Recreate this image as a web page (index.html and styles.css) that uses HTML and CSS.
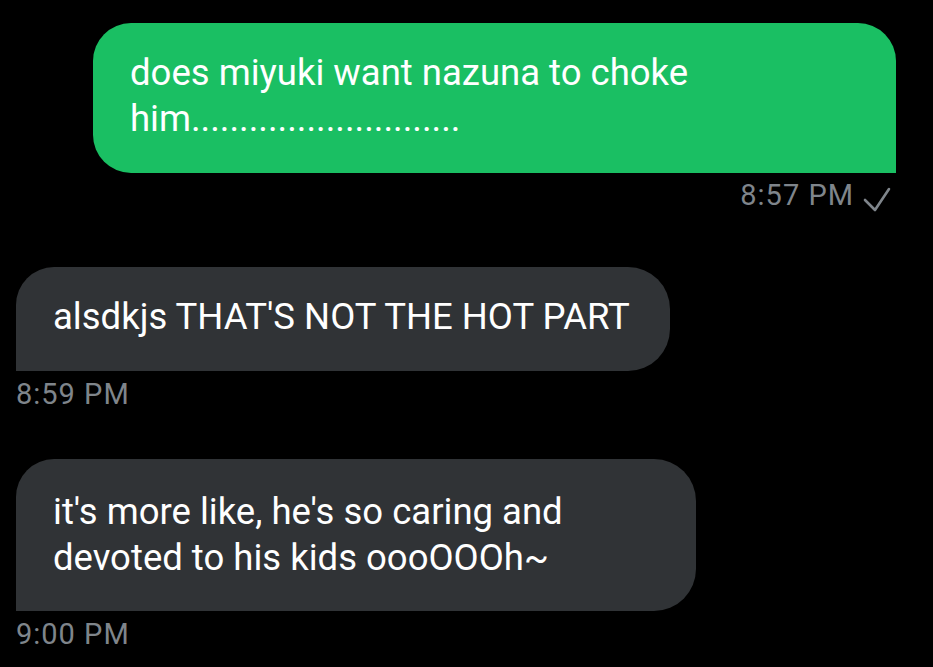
FILE: index.html
```html
<!DOCTYPE html>
<html>
<head>
<meta charset="utf-8">
<link rel="stylesheet" href="styles.css">
</head>
<body>
<div class="chat">
  <div class="msg sent">
    <div class="bubble green">does miyuki want nazuna to choke him............................</div>
    <div class="meta meta-right">
      <span>8:57 PM</span>
      <svg class="check" width="28" height="26" viewBox="0 0 28 26"><polyline points="2,13 12,23 26,2" fill="none" stroke="#7f858b" stroke-width="2.6" stroke-linecap="round" stroke-linejoin="round"/></svg>
    </div>
  </div>
  <div class="msg recv first">
    <div class="bubble grey b1">alsdkjs THAT'S NOT THE HOT PART</div>
    <div class="meta">8:59 PM</div>
  </div>
  <div class="msg recv second">
    <div class="bubble grey b2">it's more like, he's so caring and devoted to his kids oooOOOh~</div>
    <div class="meta">9:00 PM</div>
  </div>
</div>
</body>
</html>
```

FILE: styles.css
```css
html, body {
  margin: 0;
  padding: 0;
  background: #000;
}
body {
  width: 933px;
  height: 667px;
  overflow: hidden;
  font-family: Roboto, "Noto Sans", sans-serif;
}
.chat {
  display: flex;
  flex-direction: column;
  padding-top: 23px;
}
.msg {
  display: flex;
  flex-direction: column;
}
.sent {
  align-items: flex-end;
  padding-right: 37px;
}
.recv {
  align-items: flex-start;
  padding-left: 16px;
}
.bubble {
  color: #fff;
  font-size: 36.5px;
  line-height: 46px;
  box-sizing: border-box;
}
.green {
  background: #1abf63;
  width: 803px;
  padding: 27px 37px 31px 37px;
  border-radius: 38px 38px 0 38px;
}
.grey {
  background: #303336;
}
.b1 {
  width: 654px;
  padding: 27px 36px 31px 37px;
  border-radius: 38px 42px 42px 0;
}
.first {
  margin-top: 54px;
}
.second {
  margin-top: 48px;
}
.b2 {
  width: 680px;
  padding: 30px 36px 30px 37px;
  border-radius: 38px 42px 42px 0;
}
.meta {
  color: #7f858b;
  font-size: 29px;
  letter-spacing: 1px;
  line-height: 34px;
  margin-top: 6px;
}
.meta-right {
  display: flex;
  align-items: flex-start;
  gap: 9px;
  margin-top: 5px;
  margin-right: 5px;
}
.check {
  display: block;
  margin-top: 9px;
}
```
